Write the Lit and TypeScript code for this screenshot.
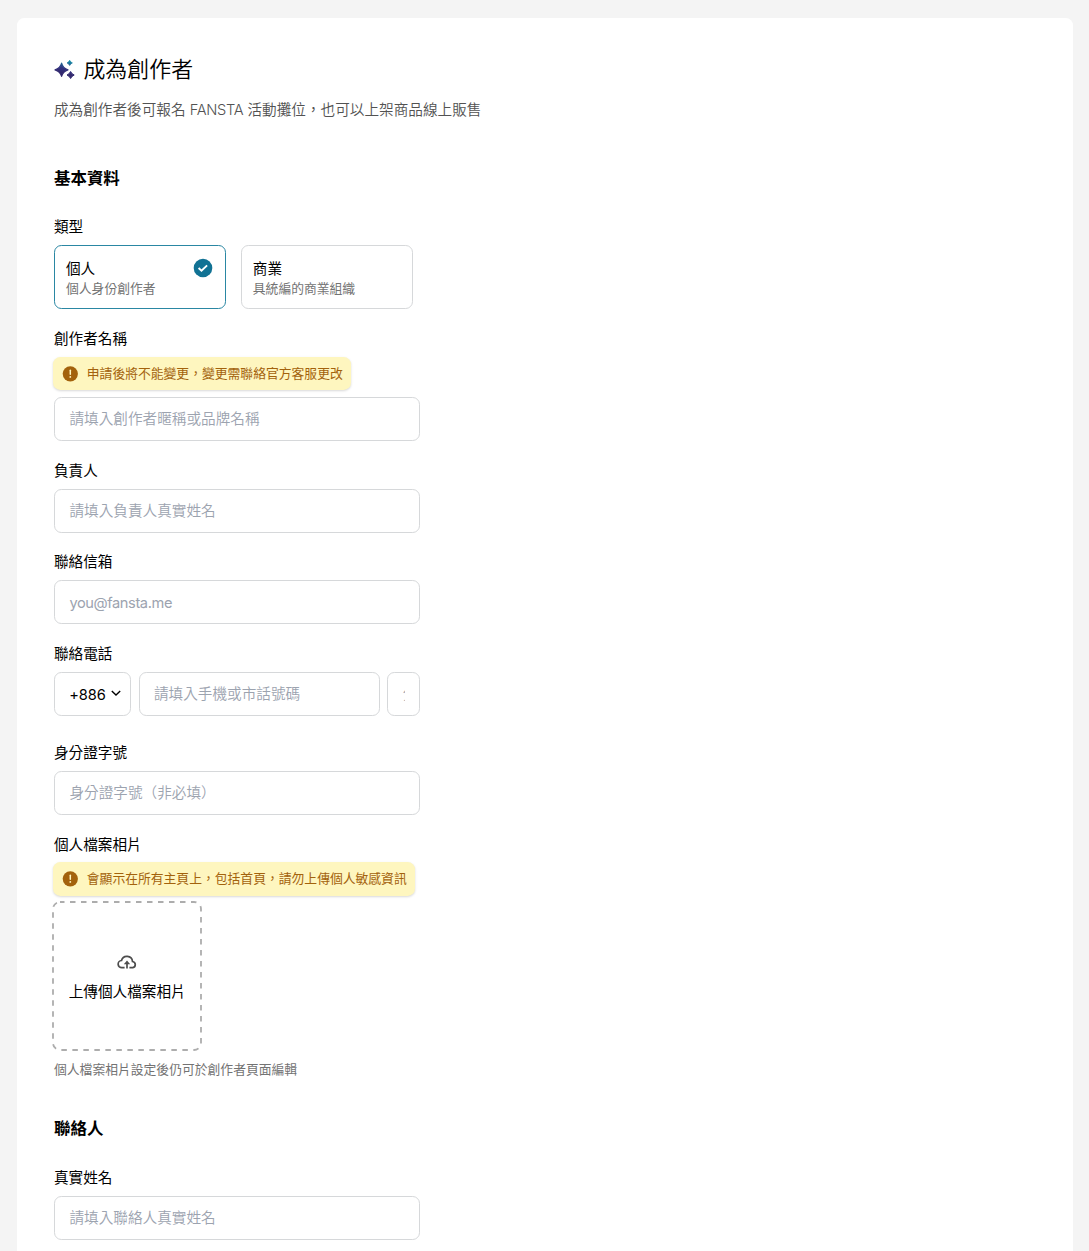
import { LitElement, html, css, nothing } from "lit";
import { customElement, property } from "lit/decorators.js";
import { classMap } from "lit/directives/class-map.js";

const shared = css`
  *, *::before, *::after { box-sizing: border-box; }
  :host {
    display: block;
    font-family: Inter, "Noto Sans CJK TC", sans-serif;
    font-size: 14.64px;
    line-height: 22px;
    color: #000;
  }
`;

const field = css`
  .label { height: 22px; padding-top: 0.5px; margin-bottom: 7.3px; white-space: nowrap; }
  input {
    display: block;
    width: 100%;
    min-width: 0;
    height: 44px;
    margin: 0;
    padding: 1px 14.4px 0;
    border: 1px solid #d6d8da;
    border-radius: 7.3px;
    background: #fff;
    font: inherit;
    color: #000;
    outline: none;
  }
  input::placeholder { color: #9ca3af; opacity: 1; font-weight: 350; }
  input[type="email"] { letter-spacing: -0.4px; }
  input[type="email"]::placeholder { font-weight: 400; }
`;

@customElement("notice-pill")
export class NoticePill extends LitElement {
  static styles = [
    shared,
    css`
      :host { display: flex; font-size: 12.81px; line-height: 18px; }
      .pill {
        display: flex;
        align-items: center;
        gap: 8.4px;
        height: 33.4px;
        margin-left: -0.6px;
        padding: 0 8px 0 9px;
        border-radius: 7.3px;
        background: #fef6bf;
        color: #a3620c;
        white-space: nowrap;
        box-shadow: 0 1px 3px rgba(0, 0, 0, 0.1), 0 1px 2px rgba(0, 0, 0, 0.06);
      }
      svg { display: block; width: 16px; height: 16px; }
      span { padding-top: 0.4px; }
    `,
  ];

  render() {
    return html`<div class="pill">
      <svg viewBox="0 0 16 16">
        <circle cx="8.3" cy="7.8" r="7.6" fill="#a3620c" />
        <path d="M8.3 4.2v4" stroke="#fef6bf" stroke-width="1.5" stroke-linecap="round" />
        <circle cx="8.3" cy="10.9" r=".9" fill="#fef6bf" />
      </svg>
      <span><slot></slot></span>
    </div>`;
  }
}

@customElement("text-field")
export class TextField extends LitElement {
  @property() label = "";
  @property() hint = "";
  @property() notice = "";
  @property() kind = "text";

  static styles = [shared, field, css`notice-pill { margin-bottom: 6.7px; }`];

  render() {
    return html`
      <div class="label">${this.label}</div>
      ${this.notice ? html`<notice-pill>${this.notice}</notice-pill>` : nothing}
      <input type=${this.kind} placeholder=${this.hint} />
    `;
  }
}

@customElement("type-option")
export class TypeOption extends LitElement {
  @property() heading = "";
  @property() detail = "";
  @property({ type: Boolean }) selected = false;

  static styles = [
    shared,
    css`
      .option {
        display: flex;
        justify-content: space-between;
        align-items: flex-start;
        width: 172px;
        height: 64px;
        padding: 11.4px 12.2px 0 11px;
        border: 1px solid #d6d8da;
        border-radius: 7.3px;
        white-space: nowrap;
      }
      .selected { border-color: #2a87a3; }
      .detail { font-size: 12.81px; line-height: 18.3px; color: #737373; }
      svg { display: block; width: 20px; height: 20px; margin-top: 0.6px; }
    `,
  ];

  render() {
    return html`<div class=${classMap({ option: true, selected: this.selected })}>
      <div>
        <div>${this.heading}</div>
        <div class="detail">${this.detail}</div>
      </div>
      ${this.selected
        ? html`<svg viewBox="0 0 20 20">
            <circle cx="10" cy="10" r="9.3" fill="#117294" />
            <path d="M5.6 10l2.9 2.8 5.6-5.4" fill="none" stroke="#fff" stroke-width="1.9" />
          </svg>`
        : nothing}
    </div>`;
  }
}

@customElement("app-root")
export class AppRoot extends LitElement {
  static styles = [
    shared,
    field,
    css`
      :host { height: 1251px; overflow: hidden; background: #f4f4f4; padding: 18px 16.5px 0 17.2px; }
      .card { height: 1260px; padding: 36px 36.8px 37px; border-radius: 7.3px; background: #fff; }
      .title { display: flex; align-items: center; gap: 7.4px; height: 30px; font-size: 21.96px; line-height: 30px; font-weight: 350; margin: 0; }
      .title svg { width: 22px; height: 22px; margin-top: 1px; }
      .subtitle { height: 22px; margin-top: 15px; color: #525252; font-weight: 350; }
      .brand { letter-spacing: -0.3px; }
      h2 { margin: 0; font-size: 16.47px; line-height: 26px; height: 26px; font-weight: 700; }
      .basic { margin-top: 43.8px; margin-bottom: 25.2px; }
      .fields { display: flex; flex-direction: column; gap: 18.3px; width: 366.3px; }
      .options { display: flex; gap: 14.8px; height: 64px; }
      .phone { display: flex; gap: 7.4px; margin-bottom: 7.4px; }
      .code {
        display: flex; align-items: center; justify-content: space-between;
        flex: 0 0 77.2px; height: 44px; padding: 3px 7.8px 0 14.2px;
        border: 1px solid #d6d8da; border-radius: 7.3px; letter-spacing: -0.1px;
      }
      .code svg { width: 12px; height: 12px; margin-top: -4px; }
      .number { flex: 1 1 0; }
      .extension { flex: 0 0 33px; width: 33px; }
      .upload {
        position: relative;
        display: flex; flex-direction: column; align-items: center; justify-content: center;
        width: 150px; height: 150px; margin: 4.8px 0 0 -1.8px; padding-top: 3px;
        white-space: nowrap;
      }
      .outline { position: absolute; inset: 0; width: 150px; height: 150px; }
      .cloud { width: 20px; height: 20px; margin-bottom: 9px; }
      .help { font-size: 12.81px; line-height: 18px; margin-top: 10.6px; color: #737373; }
      .contact { margin-top: 36.4px; margin-bottom: 25px; }
    `,
  ];

  render() {
    return html`
      <main class="card">
        <h1 class="title">
          <svg viewBox="0 0 22 22">
            <defs>
              <linearGradient id="spark" gradientUnits="userSpaceOnUse" x1="12" y1="1" x2="9" y2="14">
                <stop offset="0" stop-color="#1590a8" />
                <stop offset=".65" stop-color="#31317e" />
                <stop offset="1" stop-color="#33296f" />
              </linearGradient>
            </defs>
            <g fill="url(#spark)" stroke="url(#spark)" stroke-linejoin="round">
              <path d="M7.6 4.2Q8.9 9.2 14 10.8Q8.9 12.3 7.6 17.4Q6.2 12.3 1 10.8Q6.2 9.2 7.6 4.2Z" stroke-width="1.2" />
              <path d="M15.7 1.3Q16.5 3.2 18.4 3.9Q16.5 4.7 15.7 6.5Q14.9 4.7 13 3.9Q14.9 3.2 15.7 1.3Z" stroke-width=".7" />
              <path d="M16.6 12.5Q17.6 15 20.2 16Q17.6 17 16.6 19.5Q15.5 17 13 16Q15.5 15 16.6 12.5Z" stroke-width="1" />
            </g>
          </svg>
          <span>成為創作者</span>
        </h1>
        <div class="subtitle">成為創作者後可報名 <span class="brand">FANSTA</span> 活動攤位，也可以上架商品線上販售</div>

        <h2 class="basic">基本資料</h2>
        <div class="fields">
          <div>
            <div class="label">類型</div>
            <div class="options">
              <type-option heading="個人" detail="個人身份創作者" selected></type-option>
              <type-option heading="商業" detail="具統編的商業組織"></type-option>
            </div>
          </div>
          <text-field label="創作者名稱" notice="申請後將不能變更，變更需聯絡官方客服更改" hint="請填入創作者暱稱或品牌名稱"></text-field>
          <text-field label="負責人" hint="請填入負責人真實姓名"></text-field>
          <text-field label="聯絡信箱" kind="email" hint="you@fansta.me"></text-field>
          <div>
            <div class="label">聯絡電話</div>
            <div class="phone">
              <div class="code">
                <span>+886</span>
                <svg viewBox="0 0 12 12"><path d="M1.8 4l4.2 4 4.2-4" fill="none" stroke="#000" stroke-width="1.4" /></svg>
              </div>
              <input class="number" placeholder="請填入手機或市話號碼" />
              <input class="extension" placeholder="分機" />
            </div>
          </div>
          <text-field label="身分證字號" hint="身分證字號（非必填）"></text-field>
          <div>
            <div class="label">個人檔案相片</div>
            <notice-pill>會顯示在所有主頁上，包括首頁，請勿上傳個人敏感資訊</notice-pill>
            <div class="upload">
              <svg class="outline" viewBox="0 0 150 150">
                <rect x="1" y="1" width="148" height="148" rx="7" fill="none" stroke="#adadad" stroke-width="1.8" stroke-dasharray="5.5 5.5" stroke-dashoffset="1" />
              </svg>
              <svg class="cloud" viewBox="0 0 20 20" fill="none" stroke="#4d4d4d" stroke-width="1.7">
                <path d="M7.6 15.7H5A3.6 3.6 0 0 1 4.5 8.5A5.6 5.6 0 0 1 15.5 9.5A3.15 3.15 0 0 1 15.8 15.7H12.4" />
                <path d="M10 16.5V10.6" />
                <path d="M10 8.6L13.2 12.3H6.8Z" fill="#4d4d4d" stroke="none" />
              </svg>
              <span>上傳個人檔案相片</span>
            </div>
            <div class="help">個人檔案相片設定後仍可於創作者頁面編輯</div>
          </div>
        </div>

        <h2 class="contact">聯絡人</h2>
        <div class="fields">
          <text-field label="真實姓名" hint="請填入聯絡人真實姓名"></text-field>
        </div>
      </main>
    `;
  }
}
